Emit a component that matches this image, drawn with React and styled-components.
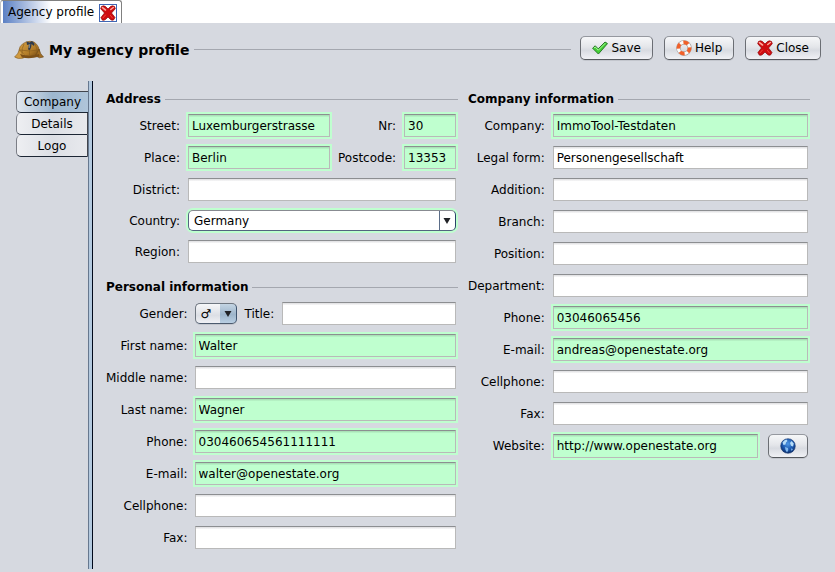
import React, { useState } from "react";
import styled, { createGlobalStyle, css } from "styled-components";

const GlobalStyle = createGlobalStyle`
  *, *::before, *::after { box-sizing: border-box; }
  html, body, #root { height: 100%; }
  body {
    margin: 0;
    background: #d6d9e0;
    color: #000;
    font: 12px/16px "DejaVu Sans", Verdana, sans-serif;
  }
  button, input, select { font: inherit; color: inherit; }
`;

const Window = styled.div`
  min-height: 100%;
  display: flex;
  flex-direction: column;
`;

const TabStrip = styled.div`
  display: flex;
  height: 23px;
  background: #fff;
`;

const DocumentTab = styled.div`
  display: flex;
  align-items: center;
  gap: 5px;
  padding: 2px 4px 0 7px;
  border: 1px solid #808080;
  border-bottom: 0;
  border-left-color: #c4c4c4;
  border-radius: 3px 3px 0 0;
  background: linear-gradient(to right, #fff 2px, #5b80c4 2px, #fff 50px);
  white-space: nowrap;
`;

const TabTitle = styled.button`
  padding: 0 0 2px;
  border: 0;
  background: none;
`;

const TabClose = styled.button`
  display: flex;
  align-items: center;
  justify-content: center;
  width: 18px;
  height: 18px;
  padding: 0;
  border: 1px solid #3f66b4;
  background: #fff;
`;

const Header = styled.header`
  display: flex;
  align-items: center;
  gap: 9px;
  padding: 13px 14px 0;
`;

const Heading = styled.div`
  flex: 1;
  display: flex;
  align-items: center;
  gap: 5px;
  padding-top: 3px;
`;

const PageTitle = styled.h1`
  margin: 0;
  font-size: 14px;
  line-height: 20px;
  white-space: nowrap;
`;

const Rule = styled.span`
  flex: 1;
  height: 1px;
  background: #a4a7af;
`;

const Actions = styled.div`
  display: flex;
  gap: 11px;
`;

const raised = css`
  border: 1px solid #6b6e74;
  border-top-color: #95989f;
  border-bottom-color: #55585d;
  border-radius: 5px;
  background: linear-gradient(#f6f7f9, #e4e6ea 45%, #d8dbe1 60%, #f0f1f5);
  box-shadow: 0 1px 0 #c3c6cd;
`;

const Button = styled.button`
  ${raised}
  display: flex;
  align-items: center;
  justify-content: center;
  gap: 3px;
  height: 24px;
  padding: 0 11px;
`;

const IconButton = styled(Button)`
  width: 40px;
  margin: 2px;
  padding: 0;
`;

const Body = styled.div`
  flex: 1;
  display: flex;
  padding: 21px 25px 3px 16px;
`;

const SideTabs = styled.nav`
  display: flex;
  flex-direction: column;
  width: 72px;
  padding-top: 10px;
`;

const SideTab = styled.button`
  height: 22px;
  padding: 0;
  border: 1px solid #42454d;
  border-right: ${(p) => (p.$active ? "0" : "1px solid #42454d")};
  border-left-color: #7b7e86;
  border-bottom-color: #1c2634;
  border-top-width: ${(p) => (p.$active ? "1px" : "0")};
  border-radius: 5px 0 0 5px;
  background: ${(p) =>
    p.$active
      ? "linear-gradient(to right, #e2e8ef, #9db7cf 50%, #afc5da)"
      : "linear-gradient(to right, #eeeff2, #dcdfe5 50%, #e8e9ed)"};
`;

const Divider = styled.div`
  width: 5px;
  border-left: 1px solid #66788f;
  border-right: 1px solid #00081a;
  background: #b3c9df;
`;

const Columns = styled.main`
  flex: 1;
  min-width: 0;
  display: grid;
  grid-template-columns: minmax(0, 352fr) minmax(0, 342fr);
  align-items: start;
  column-gap: 10px;
  padding: 10px 0 18px 13px;
`;

const Column = styled.div`
  display: grid;
  gap: 14px;
`;

const Section = styled.section`
  display: grid;
  gap: 5px;
`;

const SectionTitle = styled.h2`
  display: flex;
  align-items: center;
  gap: 4px;
  height: 16px;
  margin: 0;
  font-size: 12px;
  line-height: 18px;
  white-space: nowrap;
`;

const Fields = styled.div`
  display: grid;
  grid-template-columns: minmax(74px, auto) minmax(0, 1fr);
  align-items: center;
  gap: 5px ${(p) => (p.$narrow ? "5px" : "6px")};
`;

const Label = styled.label`
  text-align: right;
  white-space: nowrap;
`;

const NumberLabel = styled(Label)`
  width: 58px;
`;

const TitleLabel = styled(Label)`
  padding-left: 2px;
`;

const Line = styled.div`
  display: flex;
  align-items: center;
  gap: 6px;
`;

const halo = css`
  box-shadow: 0 0 0 2px #bfffcf;
`;

const TextBox = styled.input`
  flex: ${(p) => (p.$short ? "0 0 52px" : "1")};
  width: 0;
  min-width: 0;
  height: ${(p) => (p.$tall ? "24px" : "23px")};
  margin: 2px;
  padding: 0 3px;
  border: 1px solid #b9b9b9;
  border-top-color: #8c8e91;
  border-radius: 0;
  outline: 0;
  background: ${(p) =>
    p.$filled
      ? "linear-gradient(#a9e2b7 1px, #bfffcf 2px)"
      : "linear-gradient(#e4e4e6 1px, #fff 2px)"};
  ${(p) => p.$filled && halo}
`;

const arrow = `url("data:image/svg+xml,%3Csvg xmlns='http://www.w3.org/2000/svg' width='8' height='6'%3E%3Cpath d='M0.500 0h7L4 6z' fill='%23202226'/%3E%3C/svg%3E")`;

const CountrySelect = styled.select`
  flex: 1;
  appearance: none;
  height: 21px;
  margin: 2px;
  padding: 0 20px 0 5px;
  border: 1px solid #52647f;
  border-top-color: #888b91;
  border-right-color: #294268;
  border-radius: 5px;
  outline: 0;
  background:
    ${arrow} right 4px center no-repeat,
    linear-gradient(#5b6d88, #5b6d88) right 15px top / 1px 100% no-repeat,
    #fff;
  ${halo}
`;

const GenderSelect = styled.select`
  ${raised}
  appearance: none;
  width: 42px;
  height: 21px;
  margin: 2px 0 2px 2px;
  padding: 0 18px 0 5px;
  border-color: #6f7781 #3d536e #4c5b6e #6f7781;
  background:
    ${arrow} right 4px center no-repeat,
    linear-gradient(#c4d5e4, #9db5cb 55%, #b9cfe3) right / 16px 100% no-repeat,
    linear-gradient(#f6f7f9, #dcdfe5 60%, #f0f1f5);
`;

const CheckIcon = () => (
  <svg width="16" height="16" viewBox="0 0 16 16" aria-hidden="true">
    <path d="M.6 8.200 3.200 5.800l3 3L13 2l2.500 1.600L6.400 14z" fill="#43cf35" stroke="#2a7a2a" strokeWidth="1" strokeLinejoin="round" />
    <path d="m2 8 1.200-1 3.100 3.200 7-7" fill="none" stroke="#a9f59a" strokeWidth="1" />
  </svg>
);

const RedCross = () => (
  <svg width="16" height="16" viewBox="0 0 16 16" aria-hidden="true">
    <path d="M1.500 1.500Q3.500.2 5.500 1.500L8 4l2.500-2.500q2-1.300 4 0l.8 2.200L11.500 8l3.500 4.500-1.500 2.500q-1.800.6-3-.5L8 12l-2.500 2.500q-1.500 1.200-3.200.6L.9 12.600 4.500 8 .7 3.700z" fill="#cf0b10" stroke="#8f0609" strokeWidth=".7" strokeLinejoin="round" />
    <path d="m2.500 2.700 3 2.300M13.300 2.500l-2.500 2" fill="none" stroke="#ffa599" strokeWidth="1.600" strokeLinecap="round" />
    <path d="m3 12.800 2.500-2.800M12.500 13l-2-2.500" fill="none" stroke="#f2483c" strokeWidth="1" strokeLinecap="round" />
  </svg>
);

const LifeRing = () => (
  <svg width="16" height="16" viewBox="0 0 16 16" aria-hidden="true">
    <circle cx="8" cy="8" r="5.600" fill="none" stroke="#9b9490" strokeWidth="4.200" />
    <circle cx="8" cy="8" r="5.600" fill="none" stroke="#fbfbfb" strokeWidth="3.200" />
    <circle cx="8" cy="8" r="5.600" fill="none" stroke="#f0602a" strokeWidth="3.600" pathLength="80" strokeDasharray="12 8" strokeDashoffset="6" transform="rotate(20 8 8)" />
  </svg>
);

const Globe = () => (
  <svg width="16" height="16" viewBox="0 0 16 16" aria-hidden="true">
    <defs>
      <radialGradient id="sea" cx=".5" cy=".35" r=".65">
        <stop offset="0" stopColor="#4e98e6" />
        <stop offset=".6" stopColor="#1b56ac" />
        <stop offset="1" stopColor="#0b2d6b" />
      </radialGradient>
    </defs>
    <circle cx="8" cy="8" r="7.300" fill="url(#sea)" stroke="#17386f" strokeWidth=".6" />
    <path d="M2.500 4.500q1.500-2.500 4-3L7.500 3 6 4.500 5.500 6.500 3.500 7zM10 5l1.500-2 2.300 2.500-.8 3-2-.8z" fill="#b6dcf8" />
    <path d="m5 9 3 1 .3 2-1.300 2.500L5.500 12zM11 10.500l2 .5-1.500 2z" fill="#83baf0" />
  </svg>
);

const Hat = () => (
  <svg width="30" height="20" viewBox="0 0 30 20" aria-hidden="true">
    <defs>
      <linearGradient id="felt" x1="0" y1="0" x2="1" y2="1">
        <stop offset="0" stopColor="#d9a445" />
        <stop offset=".6" stopColor="#b27c28" />
        <stop offset="1" stopColor="#6a4212" />
      </linearGradient>
    </defs>
    <path d="M5 14Q4 5 12 2q4-1.500 8 0 6 4 5.500 12l-9 3z" fill="url(#felt)" stroke="#7a5119" strokeWidth=".6" />
    <path d="M5.500 10Q4 14 .6 17q3 2.500 9 1l1-3z" fill="#d09a3f" stroke="#80581c" strokeWidth=".6" />
    <path d="M25 9q1 5 4.500 8l-4 .8-4-2z" fill="#a06c22" stroke="#5f3e10" strokeWidth=".6" />
    <path d="M6 14q9 3.500 19 0l.5 2.500Q16 19.500 8 17.500z" fill="#7d5017" />
    <path d="M10 4q-2.500 4-2 10.500M21 4q2.500 4 2 10M15.500 8v7.500M6 10q9 2 19 0" fill="none" stroke="#8a5e20" strokeWidth=".7" />
    <path d="m12.500 1.500 3 1 2.500-1.500 2.500 2.500-.5 2.500-2.500-2-.3 3L16 10l-2-.5L15 4.500l-2 .5z" fill="#303b4c" />
    <path d="m15.800 4-.6 4" stroke="#8d99a8" strokeWidth=".8" />
  </svg>
);

function Field({ id, label, value = "", filled, tall, children }) {
  return (
    <>
      <Label htmlFor={id}>{label}:</Label>
      <Line>
        <TextBox id={id} defaultValue={value} $filled={filled} $tall={tall} />
        {children}
      </Line>
    </>
  );
}

function Caption({ children }) {
  return (
    <SectionTitle>
      {children}
      <Rule />
    </SectionTitle>
  );
}

function AddressSection() {
  return (
    <Section>
      <Caption>Address</Caption>
      <Fields>
        <Field id="street" label="Street" value="Luxemburgerstrasse" filled>
          <NumberLabel htmlFor="nr">Nr:</NumberLabel>
          <TextBox id="nr" defaultValue="30" $filled $short />
        </Field>
        <Field id="place" label="Place" value="Berlin" filled>
          <NumberLabel htmlFor="postcode">Postcode:</NumberLabel>
          <TextBox id="postcode" defaultValue="13353" $filled $short />
        </Field>
        <Field id="district" label="District" />
        <Label htmlFor="country">Country:</Label>
        <Line>
          <CountrySelect id="country" defaultValue="Germany">
            <option>Germany</option>
          </CountrySelect>
        </Line>
        <Field id="region" label="Region" />
      </Fields>
    </Section>
  );
}

const personFields = [
  { id: "first", label: "First name", value: "Walter", filled: true },
  { id: "middle", label: "Middle name" },
  { id: "last", label: "Last name", value: "Wagner", filled: true },
  { id: "phone", label: "Phone", value: "030460654561111111", filled: true },
  { id: "mail", label: "E-mail", value: "walter@openestate.org", filled: true },
  { id: "cell", label: "Cellphone" },
  { id: "fax", label: "Fax" },
];

function PersonSection() {
  return (
    <Section>
      <Caption>Personal information</Caption>
      <Fields $narrow>
        <Label htmlFor="gender">Gender:</Label>
        <Line>
          <GenderSelect id="gender" defaultValue="♂">
            <option>♂</option>
            <option>♀</option>
          </GenderSelect>
          <TitleLabel htmlFor="title">Title:</TitleLabel>
          <TextBox id="title" />
        </Line>
        {personFields.map((f) => (
          <Field key={f.id} {...f} />
        ))}
      </Fields>
    </Section>
  );
}

const companyFields = [
  { id: "c-name", label: "Company", value: "ImmoTool-Testdaten", filled: true },
  { id: "c-legal", label: "Legal form", value: "Personengesellschaft" },
  { id: "c-addition", label: "Addition" },
  { id: "c-branch", label: "Branch" },
  { id: "c-position", label: "Position" },
  { id: "c-department", label: "Department" },
  { id: "c-phone", label: "Phone", value: "03046065456", filled: true },
  { id: "c-mail", label: "E-mail", value: "andreas@openestate.org", filled: true },
  { id: "c-cell", label: "Cellphone" },
  { id: "c-fax", label: "Fax" },
];

function CompanySection() {
  return (
    <Section>
      <Caption>Company information</Caption>
      <Fields>
        {companyFields.map((f) => (
          <Field key={f.id} {...f} />
        ))}
        <Field id="c-web" label="Website" value="http://www.openestate.org" filled tall>
          <IconButton type="button" aria-label="Open website">
            <Globe />
          </IconButton>
        </Field>
      </Fields>
    </Section>
  );
}

export default function App() {
  const [tab, setTab] = useState("Company");
  return (
    <Window>
      <GlobalStyle />
      <TabStrip>
        <DocumentTab>
          <TabTitle type="button">Agency profile</TabTitle>
          <TabClose type="button" aria-label="Close tab">
            <RedCross />
          </TabClose>
        </DocumentTab>
      </TabStrip>
      <Header>
        <Heading>
          <Hat />
          <PageTitle>My agency profile</PageTitle>
          <Rule />
        </Heading>
        <Actions>
          <Button type="button"><CheckIcon />Save</Button>
          <Button type="button"><LifeRing />Help</Button>
          <Button type="button"><RedCross />Close</Button>
        </Actions>
      </Header>
      <Body>
        <SideTabs>
          {["Company", "Details", "Logo"].map((name) => (
            <SideTab key={name} type="button" $active={tab === name} onClick={() => setTab(name)}>
              {name}
            </SideTab>
          ))}
        </SideTabs>
        <Divider />
        <Columns>
          <Column>
            <AddressSection />
            <PersonSection />
          </Column>
          <CompanySection />
        </Columns>
      </Body>
    </Window>
  );
}
